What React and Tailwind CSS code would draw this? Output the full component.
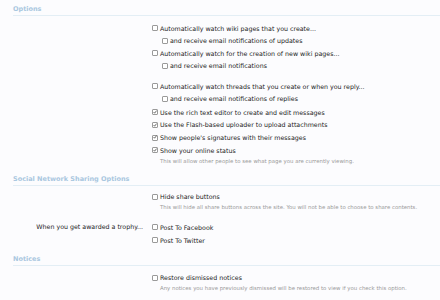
const Box = ({ checked }) => (
  <span className="mr-[2.5px] flex h-[6px] w-[6px] shrink-0 items-center justify-center rounded-[1px] border-[0.8px] border-[#9a9a9a] bg-white">
    {checked && (
      <svg viewBox="0 0 10 10" className="h-[7px] w-[7px] -translate-y-[0.5px]">
        <path d="M1.5 5.2 L4 8 L9 1.5" fill="none" stroke="#333" strokeWidth="1.8" />
      </svg>
    )}
  </span>
);

const Row = ({ children, checked, sub, h = "h-[12.5px]" }) => (
  <div className={`flex items-center ${h} ${sub ? "pl-[10px]" : ""}`}>
    <Box checked={checked} />
    <span className="text-[#222]">{children}</span>
  </div>
);

const Hint = ({ children }) => (
  <p className="pl-[8.5px] text-[5.4px] leading-[8px] text-[#9a9a9a]">{children}</p>
);

const Heading = ({ children, className = "" }) => (
  <h3 className={`border-b border-[#e3eef5] pt-[4px] pb-[1px] text-[6.5px] leading-[10px] font-bold text-[#a9c7e0] ${className}`}>
    {children}
  </h3>
);

export default function App() {
  return (
    <div
      className="h-[300px] w-[440px] overflow-hidden bg-[#fcfcfe] pl-[13px] text-[6.3px]"
      style={{ fontFamily: '"DejaVu Sans", Verdana, sans-serif' }}
    >
      <Heading>Options</Heading>
      <div className="pl-[138.5px]">
        <div className="mt-[6px]">
          <Row>Automatically watch wiki pages that you create...</Row>
          <Row sub>and receive email notifications of updates</Row>
          <Row>Automatically watch for the creation of new wiki pages...</Row>
          <Row sub>and receive email notifications</Row>
        </div>
        <div className="mt-[8px]">
          <Row>Automatically watch threads that you create or when you reply...</Row>
          <Row sub>and receive email notifications of replies</Row>
        </div>
        <div className="mt-[1px]">
          <Row checked h="h-[12.7px]">Use the rich text editor to create and edit messages</Row>
          <Row checked h="h-[12.7px]">Use the Flash-based uploader to upload attachments</Row>
          <Row checked h="h-[12.7px]">Show people's signatures with their messages</Row>
          <Row checked h="h-[12.7px]">Show your online status</Row>
          <Hint>This will allow other people to see what page you are currently viewing.</Hint>
        </div>
      </div>

      <Heading className="mt-[5px]">Social Network Sharing Options</Heading>
      <div className="pl-[138.5px]">
        <div className="mt-[5px]">
          <Row>Hide share buttons</Row>
          <Hint>This will hide all share buttons across the site. You will not be able to choose to share contents.</Hint>
        </div>
      </div>
      <div className="mt-[9.5px] flex">
        <div className="flex h-[12.5px] w-[130px] items-center justify-end whitespace-nowrap text-[#222]">
          When you get awarded a trophy...
        </div>
        <div className="pl-[8.5px]">
          <Row h="h-[13px]">Post To Facebook</Row>
          <Row h="h-[13px]">Post To Twitter</Row>
        </div>
      </div>

      <Heading className="mt-[3.5px]">Notices</Heading>
      <div className="pl-[138.5px]">
        <div className="mt-[5px]">
          <Row>Restore dismissed notices</Row>
          <Hint>Any notices you have previously dismissed will be restored to view if you check this option.</Hint>
        </div>
      </div>
    </div>
  );
}
